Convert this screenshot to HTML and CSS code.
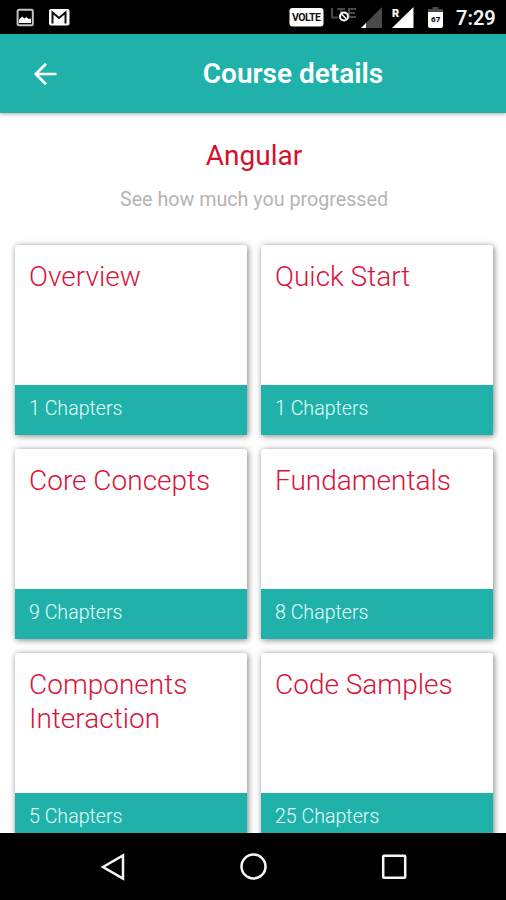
FILE: index.html
```html
<!DOCTYPE html>
<html lang="en">
<head>
<meta charset="utf-8">
<title>Course details</title>
<link rel="stylesheet" href="styles.css">
</head>
<body>
<div class="screen">
  <div class="status">
    <svg class="notices" width="60" height="34" viewBox="0 0 60 34">
      <rect x="2.600" y="9.700" width="15.200" height="15.600" rx="1.500" fill="none" stroke="#c4c4c4" stroke-width="2"/>
      <path d="M4 23v-3l3-3.500 2.500 2 2-1.500 2 2 2.500-.5v4.500z" fill="#fff"/>
      <rect x="34" y="9" width="20.500" height="16.500" rx="2" fill="#fff"/>
      <path d="M37.500 23.500V12.500l6.500 5.500 6.500-5.500v11" fill="none" stroke="#111" stroke-width="2"/>
    </svg>
    <svg class="signals" width="166" height="34" viewBox="0 0 166 34">
      <rect x="9.500" y="8" width="34" height="18.500" rx="3" fill="#fff"/>
      <text class="volte" x="12" y="21" textLength="29">VOLTE</text>
      <path d="M52 8v9.500h6M57 9h8M61 9v8M76 9h-7v8h7M69 13h6" fill="none" stroke="#484848" stroke-width="2"/>
      <circle cx="64" cy="16.500" r="4" fill="#000" stroke="#fff" stroke-width="2"/>
      <path d="M61.500 14l5 5" stroke="#fff" stroke-width="1.500"/>
      <path d="M81 28L102 7v21z" fill="#4a4a4a"/>
      <path d="M81 28l5-5v5z" fill="#fff"/>
      <path d="M112 28L133.500 7v21z" fill="#fff"/>
      <path d="M111 7h8v10h-8z" fill="#000"/>
      <text class="roam" x="112" y="17">R</text>
      <path d="M148 12h15v-3h-4.500V7h-6v2H148z" fill="#4a4a4a"/>
      <path d="M148 12h15v14q0 2-2 2h-11q-2 0-2-2z" fill="#fff"/>
      <text class="level" x="151" y="21.500">67</text>
    </svg>
    <span class="clock">7:29</span>
  </div>
  <header class="bar">
    <svg class="back" width="24" height="24" viewBox="0 0 24 24"><path d="M13 1.800L2.800 12l10.200 10.200M3.300 12H23.500" fill="none" stroke="#fff" stroke-width="2.700"/></svg>
    <h1 class="heading">Course details</h1>
  </header>
  <main class="content">
    <h2 class="course">Angular</h2>
    <p class="hint">See how much you progressed</p>
    <div class="grid">
      <section class="card"><h3 class="name">Overview</h3><p class="count">1 Chapters</p></section>
      <section class="card"><h3 class="name">Quick Start</h3><p class="count">1 Chapters</p></section>
      <section class="card"><h3 class="name">Core Concepts</h3><p class="count">9 Chapters</p></section>
      <section class="card"><h3 class="name">Fundamentals</h3><p class="count">8 Chapters</p></section>
      <section class="card"><h3 class="name">Components Interaction</h3><p class="count">5 Chapters</p></section>
      <section class="card"><h3 class="name">Code Samples</h3><p class="count">25 Chapters</p></section>
    </div>
  </main>
  <nav class="nav">
    <svg width="28" height="28" viewBox="0 0 28 28"><path d="M4 14L24 2.500v23z"/></svg>
    <svg width="28" height="28" viewBox="0 0 28 28"><circle cx="13.500" cy="13.500" r="12"/></svg>
    <svg width="28" height="28" viewBox="0 0 28 28"><rect x="3.200" y="2.800" width="22" height="22" rx=".8"/></svg>
  </nav>
</div>
</body>
</html>
```
FILE: styles.css
```css
* { box-sizing: border-box; }
body { margin: 0; font-family: Roboto, sans-serif; background: #fff; }
h1, h2, h3, p { margin: 0; }
.screen { width: 506px; height: 900px; display: flex; flex-direction: column; overflow: hidden; }
.status { height: 34px; flex: none; display: flex; align-items: center; background: #000; padding: 0 11px 0 15px; }
.signals { margin-left: auto; margin-right: 10px; }
.volte { font: 700 10.5px Roboto, sans-serif; fill: #111; }
.roam { font: 900 11px Roboto, sans-serif; fill: #fff; }
.level { font: 900 8px Roboto, sans-serif; fill: #111; }
.clock { color: #f4f4f4; font-size: 20px; font-weight: 600; width: 39px; line-height: 34px; padding-top: 2px; }
.bar { height: 79px; flex: none; display: flex; align-items: center; background: #20b2aa; padding: 0 0 0 33px; box-shadow: 0 1px 4px rgba(0,0,0,.35); position: relative; z-index: 1; }
.heading { flex: 1; color: #fff; font-size: 28px; line-height: 36px; font-weight: 600; text-align: center; padding: 1px 0 0 23px; }
.content { flex: 1; min-height: 0; overflow: hidden; padding: 25px 13px 0 15px; }
.course { text-align: center; font-size: 28px; line-height: 36px; font-weight: 400; color: #d6102c; }
.hint { text-align: center; font-size: 19.7px; line-height: 26px; margin-top: 13px; color: #b5b5b5; font-weight: 400; }
.grid { display: grid; grid-template-columns: 232px 232px; grid-auto-rows: 190px; gap: 14px; margin-top: 32px; }
.card { display: flex; flex-direction: column; background: #fff; border-radius: 3px 3px 0 0; box-shadow: 1px 1px 6px rgba(0,0,0,.5); }
.name { flex: 1; padding: 15px 14px 0; font-size: 28px; line-height: 34px; font-weight: 300; color: #d9143c; }
.count { height: 50px; padding: 0 14px; background: #20b2aa; color: #e4fffc; font-size: 19.6px; line-height: 47px; font-weight: 300; }
.nav { height: 67px; flex: none; display: flex; justify-content: space-between; align-items: center; background: #000; padding: 0 98px 0 99px; }
.nav svg { fill: none; stroke: #f5f5f5; stroke-width: 2.500; }
```
